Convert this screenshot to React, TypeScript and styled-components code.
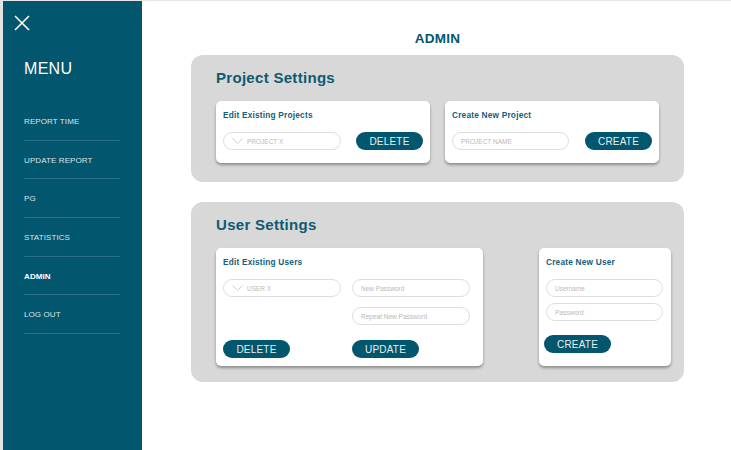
import React from "react";
import styled, { createGlobalStyle } from "styled-components";

const teal = "#02566e";

const GlobalStyle = createGlobalStyle`
  html, body {
    margin: 0;
    padding: 0;
    background: #ffffff;
    font-family: "Liberation Sans", Arial, sans-serif;
  }
`;

const Page = styled.div`
  display: flex;
  width: 731px;
  height: 450px;
  box-sizing: border-box;
  border-top: 1px solid #e6e6e6;
  overflow: hidden;
`;

const Sidebar = styled.nav`
  width: 139px;
  flex-shrink: 0;
  background: ${teal};
  border-left: 3px solid #e4e4e4;
  display: flex;
  flex-direction: column;
  padding: 14px 0 0 0;
`;

const CloseButton = styled.button`
  background: none;
  border: none;
  padding: 0;
  margin-left: 11px;
  width: 16px;
  height: 16px;
  cursor: pointer;
  display: flex;
`;

const MenuTitle = styled.h1`
  margin: 29px 0 0 21px;
  font-size: 16px;
  font-weight: 400;
  color: #ffffff;
  letter-spacing: 0.3px;
`;

const MenuList = styled.ul`
  list-style: none;
  margin: 24px 0 0 21px;
  padding: 0;
  width: 96px;
`;

const MenuItem = styled.li<{ $active?: boolean }>`
  height: 38.7px;
  box-sizing: border-box;
  padding-top: 15px;
  border-bottom: 1px solid #2a7187;
  font-size: 8px;
  color: ${({ $active }) => ($active ? "#ffffff" : "#dbe6ea")};
  font-weight: ${({ $active }) => ($active ? 700 : 400)};
  letter-spacing: 0.1px;
`;

const Main = styled.main`
  flex: 1;
  display: flex;
  flex-direction: column;
  align-items: center;
  padding: 30px 0 0 2px;
`;

const PageTitle = styled.h2`
  margin: 0;
  height: 24px;
  font-size: 13.5px;
  font-weight: 700;
  color: ${teal};
  letter-spacing: 0.3px;
`;

const Panel = styled.section<{ $height: number; $padRight: number }>`
  width: 493px;
  height: ${({ $height }) => $height}px;
  box-sizing: border-box;
  background: #d8d8d8;
  border-radius: 12px;
  padding: 14px ${({ $padRight }) => $padRight}px 0 25px;
  margin-bottom: 20px;
`;

const PanelTitle = styled.h3`
  margin: 0;
  height: 32px;
  font-size: 15px;
  font-weight: 700;
  color: #0f5a70;
  letter-spacing: 0.3px;
`;

const CardRow = styled.div`
  display: flex;
  gap: 15px;
`;

const Card = styled.div<{ $width: number; $height: number; $push?: boolean }>`
  width: ${({ $width }) => $width}px;
  height: ${({ $height }) => $height}px;
  box-sizing: border-box;
  background: #ffffff;
  border-radius: 5px;
  box-shadow: 0 2px 3px rgba(0, 0, 0, 0.35);
  padding: 9px 7px 0 7px;
  margin-left: ${({ $push }) => ($push ? "auto" : "0")};
`;

const CardTitle = styled.h4`
  margin: 0;
  height: 22px;
  font-size: 8.3px;
  font-weight: 700;
  color: #13607a;
  letter-spacing: 0.2px;
`;

const ControlRow = styled.div`
  display: flex;
  justify-content: space-between;
  align-items: center;
`;

const UserGrid = styled.div`
  display: grid;
  grid-template-columns: 118px 118px;
  column-gap: 11px;
  grid-template-rows: 18px 18px 18px;
  row-gap: 10px;
  & > :nth-child(5),
  & > :nth-child(6) {
    margin-top: 5px;
  }
`;

const Stack = styled.div`
  display: flex;
  flex-direction: column;
  gap: 6px;
`;

const Field = styled.div<{ $width?: number }>`
  width: ${({ $width }) => $width ?? 118}px;
  height: 18px;
  box-sizing: border-box;
  border: 1px solid #dddddd;
  border-radius: 9px;
  display: flex;
  align-items: center;
  padding-left: 8px;
  gap: 4px;
  font-size: 6.5px;
  color: #b9b9b9;
  background: #ffffff;
`;

const Button = styled.button<{ $offset?: number; $top?: number }>`
  width: 67px;
  height: 18px;
  border: none;
  border-radius: 9px;
  background: ${teal};
  color: #e9f0f2;
  font-family: "Liberation Sans", Arial, sans-serif;
  font-size: 10px;
  letter-spacing: 0.2px;
  padding: 0;
  cursor: pointer;
  margin-left: ${({ $offset }) => $offset ?? 0}px;
  margin-top: ${({ $top }) => $top ?? 0}px;
`;

const Chevron = () => (
  <svg width="11" height="6" viewBox="0 0 11 6">
    <path d="M0.5 0.5 L5.5 5.3 L10.5 0.5" fill="none" stroke="#c4c4c4" strokeWidth="0.8" />
  </svg>
);

const CloseIcon = () => (
  <svg width="16" height="16" viewBox="0 0 16 16">
    <path d="M1 1 L15 15 M15 1 L1 15" stroke="#ffffff" strokeWidth="1.6" />
  </svg>
);

const menu = ["REPORT TIME", "UPDATE REPORT", "PG", "STATISTICS", "ADMIN", "LOG OUT"];

export default function App() {
  return (
    <>
      <GlobalStyle />
      <Page>
        <Sidebar>
          <CloseButton aria-label="close">
            <CloseIcon />
          </CloseButton>
          <MenuTitle>MENU</MenuTitle>
          <MenuList>
            {menu.map((m) => (
              <MenuItem key={m} $active={m === "ADMIN"}>
                {m}
              </MenuItem>
            ))}
          </MenuList>
        </Sidebar>
        <Main>
          <PageTitle>ADMIN</PageTitle>
          <Panel $height={127} $padRight={25}>
            <PanelTitle>Project Settings</PanelTitle>
            <CardRow>
              <Card $width={214} $height={62}>
                <CardTitle>Edit Existing Projects</CardTitle>
                <ControlRow>
                  <Field>
                    <Chevron />
                    PROJECT X
                  </Field>
                  <Button>DELETE</Button>
                </ControlRow>
              </Card>
              <Card $width={214} $height={62}>
                <CardTitle>Create New Project</CardTitle>
                <ControlRow>
                  <Field $width={117}>PROJECT NAME</Field>
                  <Button>CREATE</Button>
                </ControlRow>
              </Card>
            </CardRow>
          </Panel>
          <Panel $height={180} $padRight={13}>
            <PanelTitle>User Settings</PanelTitle>
            <CardRow>
              <Card $width={267} $height={118}>
                <CardTitle>Edit Existing Users</CardTitle>
                <UserGrid>
                  <Field>
                    <Chevron />
                    USER X
                  </Field>
                  <Field>New Password</Field>
                  <span />
                  <Field>Repeat New Password</Field>
                  <Button>DELETE</Button>
                  <Button>UPDATE</Button>
                </UserGrid>
              </Card>
              <Card $width={132} $height={118} $push>
                <CardTitle>Create New User</CardTitle>
                <Stack>
                  <Field $width={117}>Username</Field>
                  <Field $width={117}>Password</Field>
                  <Button $offset={-2} $top={8}>
                    CREATE
                  </Button>
                </Stack>
              </Card>
            </CardRow>
          </Panel>
        </Main>
      </Page>
    </>
  );
}
